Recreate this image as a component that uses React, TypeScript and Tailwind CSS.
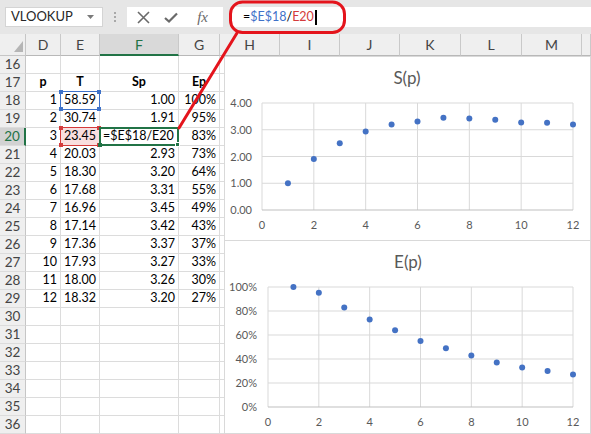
import React from 'react';

const colW = [
  'w-[35px]',
  'w-[39px]',
  'w-[79px]',
  'w-[41px]',
  'w-[60px]',
  'w-[60px]',
  'w-[60px]',
  'w-[61px]',
  'w-[61px]',
  'w-[60px]',
  'w-[9px]',
];
const letters = ['D', 'E', 'F', 'G', 'H', 'I', 'J', 'K', 'L', 'M', ''];

const T = ['58.59', '30.74', '23.45', '20.03', '18.30', '17.68', '16.96', '17.14', '17.36', '17.93', '18.00', '18.32'];
const S = ['1.00', '1.91', '', '2.93', '3.20', '3.31', '3.45', '3.42', '3.37', '3.27', '3.26', '3.20'];
const E = ['100%', '95%', '83%', '73%', '64%', '55%', '49%', '43%', '37%', '33%', '30%', '27%'];

const Sv = [1.0, 1.91, 2.5, 2.93, 3.2, 3.31, 3.45, 3.42, 3.37, 3.27, 3.26, 3.2];
const Ev = [100, 95.3, 83, 73, 64, 55, 49, 43, 37, 33, 30, 27];

const rows = Array.from({ length: 21 }, (_, i) => 16 + i);

function Corners({ color }: { color: string }) {
  return (
    <>
      <div className="absolute left-[-2px] top-[-2px] w-[4px] h-[4px]" style={{ background: color }} />
      <div className="absolute right-[-2px] top-[-2px] w-[4px] h-[4px]" style={{ background: color }} />
      <div className="absolute left-[-2px] bottom-[-2px] w-[4px] h-[4px]" style={{ background: color }} />
      <div className="absolute right-[-2px] bottom-[-2px] w-[4px] h-[4px]" style={{ background: color }} />
    </>
  );
}

function Cell({
  w,
  children,
  align = 'end',
  bold = false,
  extra = '',
  overlay,
}: {
  w: string;
  children?: React.ReactNode;
  align?: 'end' | 'center' | 'start';
  bold?: boolean;
  extra?: string;
  overlay?: React.ReactNode;
}) {
  const j = align === 'end' ? 'justify-end' : align === 'center' ? 'justify-center' : 'justify-start';
  return (
    <div
      className={`${w} ${j} ${bold ? 'font-bold' : ''} ${extra} relative shrink-0 h-[18px] border-r border-b border-[#dcdcdc] flex items-center px-[3px] whitespace-nowrap`}
    >
      {children}
      {overlay}
    </div>
  );
}

function SheetRow({ r }: { r: number }) {
  const idx = r - 18;
  const data = idx >= 0 && idx < 12;
  const isHeader = r === 17;
  const active = r === 20;
  return (
    <div className="flex">
      <div
        className={`w-[26px] shrink-0 h-[18px] flex items-center justify-center border-b border-[#dcdcdc] text-[13.5px] ${
          active
            ? 'bg-[#d2d2d2] text-[#217346] border-r-2 border-r-[#217346]'
            : 'bg-[#efefef] text-[#444] border-r border-r-[#c6c6c6]'
        }`}
      >
        {r}
      </div>
      <Cell w={colW[0]} align={isHeader ? 'center' : 'end'} bold={isHeader}>
        {isHeader ? 'p' : data ? String(idx + 1) : ''}
      </Cell>
      <Cell
        w={colW[1]}
        align={isHeader ? 'center' : 'end'}
        bold={isHeader}
        extra={r === 20 ? 'bg-[#f8dede]' : ''}
        overlay={
          r === 18 ? (
            <div className="absolute left-[-1px] top-[-1px] right-[-1px] bottom-[-1px] border-[1.5px] border-[#3f72c9] z-10">
              <Corners color="#3f72c9" />
            </div>
          ) : r === 20 ? (
            <div className="absolute left-[-1px] top-[-1px] right-[-1px] bottom-[-1px] border-[1.5px] border-[#d43b3b] z-10">
              <Corners color="#d43b3b" />
            </div>
          ) : null
        }
      >
        {isHeader ? 'T' : data ? T[idx] : ''}
      </Cell>
      <Cell
        w={colW[2]}
        align={isHeader ? 'center' : r === 20 ? 'start' : 'end'}
        bold={isHeader}
        overlay={
          r === 20 ? (
            <div className="absolute left-[-1px] top-[-1px] right-[-1px] bottom-[-1px] border-2 border-[#217346] z-10">
              <div className="absolute right-[-3px] bottom-[-3px] w-[5px] h-[5px] bg-[#217346] border border-white" />
              <div className="absolute left-[-3px] bottom-[-3px] w-[4px] h-[4px] bg-[#217346]" />
            </div>
          ) : null
        }
      >
        {isHeader ? 'Sp' : r === 20 ? '=$E$18/E20' : data ? S[idx] : ''}
      </Cell>
      <Cell w={colW[3]} align={isHeader ? 'center' : 'end'} bold={isHeader}>
        {isHeader ? 'Ep' : data ? E[idx] : ''}
      </Cell>
      {colW.slice(4).map((w, i) => (
        <Cell key={i} w={w} />
      ))}
    </div>
  );
}

function SChart() {
  const x0 = 37;
  const x1 = 348;
  const yTop = 46;
  const yBot = 153;
  const xs = (v: number) => x0 + (v * (x1 - x0)) / 12;
  const ys = (s: number) => yBot - (s * (yBot - yTop)) / 4;
  return (
    <svg width="365" height="183" className="block">
      <text x="182" y="27" textAnchor="middle" fontSize="17" fill="#595959" fontFamily="Lato, sans-serif">
        S(p)
      </text>
      {[0, 2, 4, 6, 8, 10, 12].map((v) => (
        <line key={'v' + v} x1={xs(v)} x2={xs(v)} y1={yTop} y2={yBot} stroke="#d9d9d9" strokeWidth="1" />
      ))}
      {[0, 1, 2, 3, 4].map((s) => (
        <line key={'h' + s} x1={x0} x2={x1} y1={ys(s)} y2={ys(s)} stroke={s === 0 ? '#bfbfbf' : '#d9d9d9'} strokeWidth="1" />
      ))}
      {[0, 1, 2, 3, 4].map((s) => (
        <text key={'yl' + s} x="27" y={ys(s) + 4} textAnchor="end" fontSize="11" fill="#595959" fontFamily="Lato, sans-serif">
          {s.toFixed(2)}
        </text>
      ))}
      {[0, 2, 4, 6, 8, 10, 12].map((v) => (
        <text key={'xl' + v} x={xs(v)} y="172" textAnchor="middle" fontSize="11" fill="#595959" fontFamily="Lato, sans-serif">
          {v}
        </text>
      ))}
      {Sv.map((s, i) => (
        <circle key={'p' + i} cx={xs(i + 1)} cy={ys(s)} r="3" fill="#4472c4" />
      ))}
    </svg>
  );
}

function EChart() {
  const x0 = 43;
  const x1 = 348;
  const yTop = 46;
  const yBot = 166;
  const xs = (v: number) => x0 + (v * (x1 - x0)) / 12;
  const ys = (e: number) => yBot - (e * (yBot - yTop)) / 100;
  return (
    <svg width="365" height="192" className="block">
      <text x="183" y="27" textAnchor="middle" fontSize="17" fill="#595959" fontFamily="Lato, sans-serif">
        E(p)
      </text>
      {[0, 2, 4, 6, 8, 10, 12].map((v) => (
        <line key={'v' + v} x1={xs(v)} x2={xs(v)} y1={yTop} y2={yBot} stroke="#d9d9d9" strokeWidth="1" />
      ))}
      {[0, 20, 40, 60, 80, 100].map((e) => (
        <line key={'h' + e} x1={x0} x2={x1} y1={ys(e)} y2={ys(e)} stroke={e === 0 ? '#bfbfbf' : '#d9d9d9'} strokeWidth="1" />
      ))}
      {[0, 20, 40, 60, 80, 100].map((e) => (
        <text key={'yl' + e} x="32" y={ys(e) + 4} textAnchor="end" fontSize="11" fill="#595959" fontFamily="Lato, sans-serif">
          {e}%
        </text>
      ))}
      {[0, 2, 4, 6, 8, 10, 12].map((v) => (
        <text key={'xl' + v} x={xs(v)} y="185" textAnchor="middle" fontSize="11" fill="#595959" fontFamily="Lato, sans-serif">
          {v}
        </text>
      ))}
      {Ev.map((e, i) => (
        <circle key={'p' + i} cx={xs(i + 1)} cy={ys(e)} r="3" fill="#4472c4" />
      ))}
    </svg>
  );
}

export default function App() {
  return (
    <div className="relative w-[591px] h-[434px] overflow-hidden bg-white text-[12.5px] text-black [font-family:Lato,'Open_Sans',sans-serif]">
      {/* Formula bar */}
      <div className="h-[34px] bg-[#e6e6e6] flex items-center">
        <div className="ml-[5px] w-[98px] h-[20px] bg-white border border-[#d4d4d4] flex items-center pl-[5px] pr-[8px] text-[13px] text-[#262626]">
          <span className="flex-1">VLOOKUP</span>
          <svg width="7" height="4" viewBox="0 0 7 4">
            <path d="M0 0 L7 0 L3.5 4 Z" fill="#7a7a7a" />
          </svg>
        </div>
        <div className="ml-[11px] w-[2px] flex flex-col gap-[2px]">
          <div className="w-[2px] h-[2px] bg-[#a8a8a8]" />
          <div className="w-[2px] h-[2px] bg-[#a8a8a8]" />
          <div className="w-[2px] h-[2px] bg-[#a8a8a8]" />
        </div>
        <div className="ml-[11px] w-[96px] h-[20px] bg-white flex items-center">
          <div className="w-[38px] flex justify-center">
            <svg width="13" height="13" viewBox="0 0 13 13">
              <path d="M1 1 L12 12 M12 1 L1 12" stroke="#6a6a6a" strokeWidth="1.6" />
            </svg>
          </div>
          <div className="w-[24px] flex justify-center">
            <svg width="14" height="11" viewBox="0 0 14 11">
              <path d="M1 6 L5 9.5 L13 1.5" stroke="#6a6a6a" strokeWidth="2.2" fill="none" />
            </svg>
          </div>
          <div className="w-[46px] flex justify-center">
            <span className="italic text-[15px] text-[#6a6a6a] [font-family:'Liberation_Serif',serif]">fx</span>
          </div>
        </div>
        <div className="ml-[8px] flex-1 h-[20px] bg-white flex items-center pl-[12px] text-[12.5px]">
          <span>=</span>
          <span className="text-[#3f72c9]">$E$18</span>
          <span>/</span>
          <span className="text-[#d43b3b]">E20</span>
          <span className="ml-[1px] w-[2px] h-[15px] bg-black" />
        </div>
      </div>

      {/* Column headers */}
      <div className="flex h-[22px]">
        <div className="w-[26px] shrink-0 h-[22px] bg-[#efefef] border-r border-b border-[#c6c6c6] flex items-end justify-end pr-[2px] pb-[3px]">
          <svg width="9" height="11" viewBox="0 0 9 11">
            <path d="M9 0 L9 11 L0 11 Z" fill="#b5b5b5" />
          </svg>
        </div>
        {letters.map((l, i) => (
          <div
            key={i}
            className={`${colW[i]} shrink-0 h-[22px] flex items-center justify-center border-r border-r-[#c9c9c9] text-[14px] ${
              l === 'F'
                ? 'bg-[#d9d9d9] text-[#217346] border-b-2 border-b-[#217346]'
                : 'bg-[#efefef] text-[#444] border-b border-b-[#b8b8b8]'
            }`}
          >
            {l}
          </div>
        ))}
      </div>

      {/* Rows */}
      <div className="flex flex-col">
        {rows.map((r) => (
          <SheetRow key={r} r={r} />
        ))}
      </div>

      {/* Floating charts */}
      <div className="absolute left-[224px] top-[56px] w-[367px] h-[185px] bg-white border border-[#d9d9d9]">
        <SChart />
      </div>
      <div className="absolute left-[224px] top-[240px] w-[367px] h-[194px] bg-white border border-[#d9d9d9]">
        <EChart />
      </div>

      {/* Red annotation */}
      <svg className="absolute inset-0 pointer-events-none z-50" width="591" height="434">
        <rect x="230.5" y="2" width="114" height="30.5" rx="12" fill="none" stroke="#e4141c" strokeWidth="3" />
        <line x1="237" y1="33" x2="179" y2="128" stroke="#e4141c" strokeWidth="3" strokeLinecap="round" />
      </svg>
    </div>
  );
}
